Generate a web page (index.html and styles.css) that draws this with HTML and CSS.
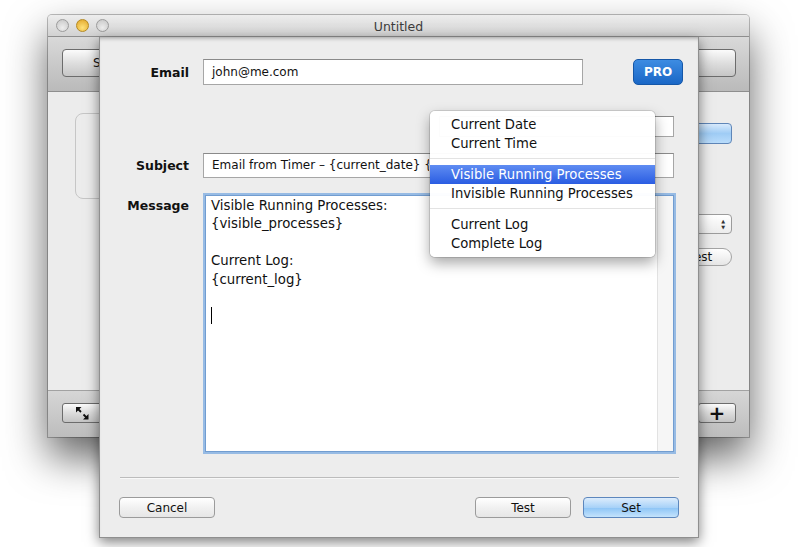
FILE: index.html
```
<!DOCTYPE html>
<html lang="en">
<head>
  <meta charset="UTF-8" />
  <title>Untitled</title>
  <link rel="stylesheet" href="styles.css">
</head>
<body>
  <div class="desk">

    <div class="window">
      <div class="titlebar">
        <div class="lights">
          <span class="light"></span>
          <span class="light light-min"></span>
          <span class="light"></span>
        </div>
        <div class="title">Untitled</div>
      </div>

      <div class="toolbar">
        <button class="tb-btn tb-start">Start</button>
        <button class="tb-btn tb-right"></button>
      </div>

      <div class="win-content">
        <div class="group"></div>
        <div class="side">
          <button class="side-blue"></button>
          <div class="side-popup"><span class="updown">&#9650;<br>&#9660;</span></div>
          <button class="side-test">Test</button>
        </div>
      </div>

      <div class="bottombar">
        <button class="bb-btn">
          <svg width="13" height="13" viewBox="0 0 13 13">
            <path d="M0 0 L5.5 0 L0 5.5 Z M12.5 12.5 L7 12.5 L12.5 7 Z" fill="#111"/>
            <path d="M1.5 1.5 L5 5 M11 11 L7.5 7.5" stroke="#111" stroke-width="1.8"/>
          </svg>
        </button>
        <button class="bb-btn bb-plus">+</button>
      </div>
    </div>

    <div class="sheet">
      <div class="row row-email">
        <label class="lbl">Email</label>
        <div class="field email">john@me.com</div>
        <button class="pro">PRO</button>
      </div>

      <div class="row row-insert">
        <div class="field insert"></div>
      </div>

      <div class="row row-subject">
        <label class="lbl">Subject</label>
        <div class="field subject"><span class="subject-text">Email from Timer – {current_date} {current_time}</span></div>
      </div>

      <div class="row row-message">
        <label class="lbl lbl-top">Message</label>
        <div class="msg">
          <div class="msg-text">Visible Running Processes:
{visible_processes}

Current Log:
{current_log}

<span class="caret"></span></div>
          <div class="scroll"></div>
        </div>
      </div>

      <div class="sep"></div>

      <div class="actions">
        <button class="btn">Cancel</button>
        <button class="btn btn-test">Test</button>
        <button class="btn btn-default">Set</button>
      </div>
    </div>

    <div class="menu">
      <div class="menu-item">Current Date</div>
      <div class="menu-item">Current Time</div>
      <div class="menu-sep"></div>
      <div class="menu-item menu-active">Visible Running Processes</div>
      <div class="menu-item">Invisible Running Processes</div>
      <div class="menu-sep"></div>
      <div class="menu-item">Current Log</div>
      <div class="menu-item">Complete Log</div>
    </div>

  </div>
</body>
</html>
```

FILE: styles.css
```
body {
  margin: 0;
  background: #fff;
  font-family: "DejaVu Sans", Verdana, sans-serif;
  color: #111;
}
button {
  font-family: inherit;
  color: inherit;
  padding: 0;
  cursor: default;
}
.desk {
  position: relative;
  width: 798px;
  height: 547px;
  overflow: hidden;
}

/* background window */
.window {
  position: absolute;
  left: 48px;
  top: 15px;
  width: 701px;
  height: 422px;
  display: flex;
  flex-direction: column;
  border-radius: 4px 4px 0 0;
  background: #ececec;
  box-shadow: 0 0 0 1px rgba(0,0,0,0.25), 0 20px 42px rgba(0,0,0,0.62);
}
.titlebar {
  height: 21px;
  position: relative;
  display: flex;
  align-items: center;
  justify-content: center;
  border-radius: 4px 4px 0 0;
  background: linear-gradient(#ededed, #d2d2d2);
  border-bottom: 1px solid #8e8e8e;
}
.lights {
  position: absolute;
  left: 8px;
  top: 4px;
  display: flex;
  gap: 7px;
}
.light {
  width: 11px;
  height: 11px;
  border-radius: 50%;
  border: 1px solid #9c9c9c;
  background: radial-gradient(circle at 50% 70%, #eeeeee, #c4c4c4);
}
.light-min {
  border-color: #b58a22;
  background: radial-gradient(circle at 50% 70%, #ffe27a, #e0a325);
}
.title {
  font-size: 12.5px;
  color: #3c3c3c;
  margin-top: 1px;
}
.toolbar {
  height: 55px;
  box-sizing: border-box;
  display: flex;
  justify-content: space-between;
  align-items: flex-start;
  padding: 12px 13px 0 14px;
  background: linear-gradient(#d9d9d9, #bababa);
  border-bottom: 1px solid #8e8e8e;
}
.tb-btn {
  height: 28px;
  border: 1px solid #6c6c6c;
  border-radius: 4px;
  background: linear-gradient(#fbfbfb, #dedede 50%, #c6c6c6);
  font-size: 12px;
}
.tb-start {
  width: 90px;
  text-align: left;
  padding-left: 30px;
}
.tb-right {
  width: 46px;
}
.win-content {
  flex: 1;
  display: flex;
  align-items: flex-start;
  padding: 21px 17px 0 27px;
  background: #ececec;
}
.group {
  width: 500px;
  height: 84px;
  border: 1px solid #c6c6c6;
  border-radius: 8px;
}
.side {
  margin-left: auto;
  width: 80px;
  display: flex;
  flex-direction: column;
  align-items: flex-end;
}
.side-blue {
  margin-top: 10px;
  width: 70px;
  height: 21px;
  border: 1px solid #5f86b8;
  border-radius: 4px;
  background: linear-gradient(#d8eafc, #9fccf5 50%, #b9dcfb);
}
.side-popup {
  margin-top: 70px;
  width: 70px;
  height: 20px;
  box-sizing: border-box;
  border: 1px solid #9c9c9c;
  border-radius: 4px;
  background: linear-gradient(#ffffff, #ececec);
  display: flex;
  justify-content: flex-end;
  align-items: center;
  padding-right: 6px;
}
.updown {
  font-size: 5px;
  line-height: 6px;
  color: #333;
  text-align: center;
}
.side-test {
  margin-top: 14px;
  width: 63px;
  height: 18px;
  border: 1px solid #a4a4a4;
  border-radius: 9px;
  background: linear-gradient(#ffffff, #e6e6e6);
  font-size: 12px;
}
.bottombar {
  height: 47px;
  box-sizing: border-box;
  display: flex;
  justify-content: space-between;
  align-items: flex-start;
  padding: 12px 13px 0 14px;
  border-top: 1px solid #a2a2a2;
  background: linear-gradient(#d6d6d6, #bdbdbd);
}
.bb-btn {
  width: 40px;
  height: 20px;
  display: flex;
  align-items: center;
  justify-content: center;
  border: 1px solid #6c6c6c;
  border-radius: 3px;
  background: linear-gradient(#fbfbfb, #dcdcdc 50%, #c4c4c4);
}
.bb-plus {
  width: 38px;
  font-size: 20px;
  font-weight: bold;
  line-height: 18px;
}

/* sheet */
.sheet {
  position: absolute;
  left: 99px;
  top: 37px;
  width: 600px;
  height: 501px;
  box-sizing: border-box;
  background: #ededed;
  border: 1px solid #8f8f8f;
  border-top: none;
  box-shadow: inset 0 4px 4px -3px rgba(0,0,0,0.35), 0 4px 12px rgba(0,0,0,0.5);
}
.row {
  display: flex;
  align-items: center;
}
.lbl {
  width: 89px;
  margin-right: 14px;
  text-align: right;
  font-size: 12.5px;
  font-weight: bold;
  color: #111;
}
.lbl-top {
  padding-top: 3px;
  line-height: 16px;
}
.field {
  box-sizing: border-box;
  background: #fff;
  border: 1px solid #a6a6a6;
  border-top-color: #8a8a8a;
  padding-left: 8px;
  font-size: 12px;
  white-space: nowrap;
  overflow: hidden;
}
.row-email {
  margin-top: 22px;
}
.email {
  width: 380px;
  height: 26px;
  line-height: 24px;
}
.pro {
  margin-left: 50px;
  width: 50px;
  height: 26px;
  border: 1px solid #1557a8;
  border-radius: 5px;
  background: linear-gradient(#3d8ce2, #1a67c6);
  color: #fff;
  font-size: 12px;
  font-weight: bold;
}
.row-insert {
  margin-top: 31px;
}
.insert {
  margin-left: 339px;
  width: 235px;
  height: 21px;
}
.row-subject {
  margin-top: 16px;
}
.subject {
  width: 471px;
  height: 25px;
  line-height: 23px;
}
.subject-text {
  display: inline-block;
  width: 217px;
  overflow: hidden;
  vertical-align: top;
}
.row-message {
  margin-top: 17px;
  align-items: flex-start;
}
.msg {
  margin-left: 2px;
  width: 469px;
  height: 257px;
  box-sizing: border-box;
  display: flex;
  background: #fff;
  border: 1px solid #729dd0;
  box-shadow: 0 0 0 2px #97bbe4;
}
.msg-text {
  flex: 1;
  padding: 1px 0 0 5px;
  font-size: 13.3px;
  line-height: 18.4px;
  white-space: pre;
  color: #111;
}
.caret {
  display: inline-block;
  width: 1px;
  height: 17px;
  background: #000;
  vertical-align: -4px;
}
.scroll {
  width: 15px;
  background: #f6f6f6;
  border-left: 1px solid #e2e2e2;
}
.sep {
  margin: 25px 0 0 20px;
  width: 559px;
  border-top: 1px solid #bcbcbc;
  border-bottom: 1px solid #f8f8f8;
}
.actions {
  display: flex;
  margin-top: 18px;
  padding: 0 19px;
}
.btn {
  width: 96px;
  height: 21px;
  border: 1px solid #9b9b9b;
  border-radius: 4px;
  background: linear-gradient(#ffffff, #f1f1f1 50%, #e6e6e6);
  font-size: 12px;
}
.btn-test {
  margin-left: auto;
}
.btn-default {
  margin-left: 12px;
  border-color: #5d87bd;
  background: linear-gradient(#dcecfc, #a8d2f8 50%, #8cc4f6 51%, #c4e3fc);
}

/* popup menu */
.menu {
  position: absolute;
  left: 430px;
  top: 111px;
  width: 225px;
  padding: 4px 0;
  box-sizing: border-box;
  background: rgba(255,255,255,0.97);
  border-radius: 5px;
  box-shadow: 0 0 0 1px rgba(0,0,0,0.12), 0 6px 14px rgba(0,0,0,0.35);
}
.menu-item {
  height: 19px;
  line-height: 19px;
  padding-left: 21px;
  font-size: 13.2px;
  color: #111;
}
.menu-active {
  background: linear-gradient(#5f8cf2, #2a5de2);
  color: #fff;
}
.menu-sep {
  height: 1px;
  margin: 5px 0 6px;
  background: #e3e3e3;
}
```
